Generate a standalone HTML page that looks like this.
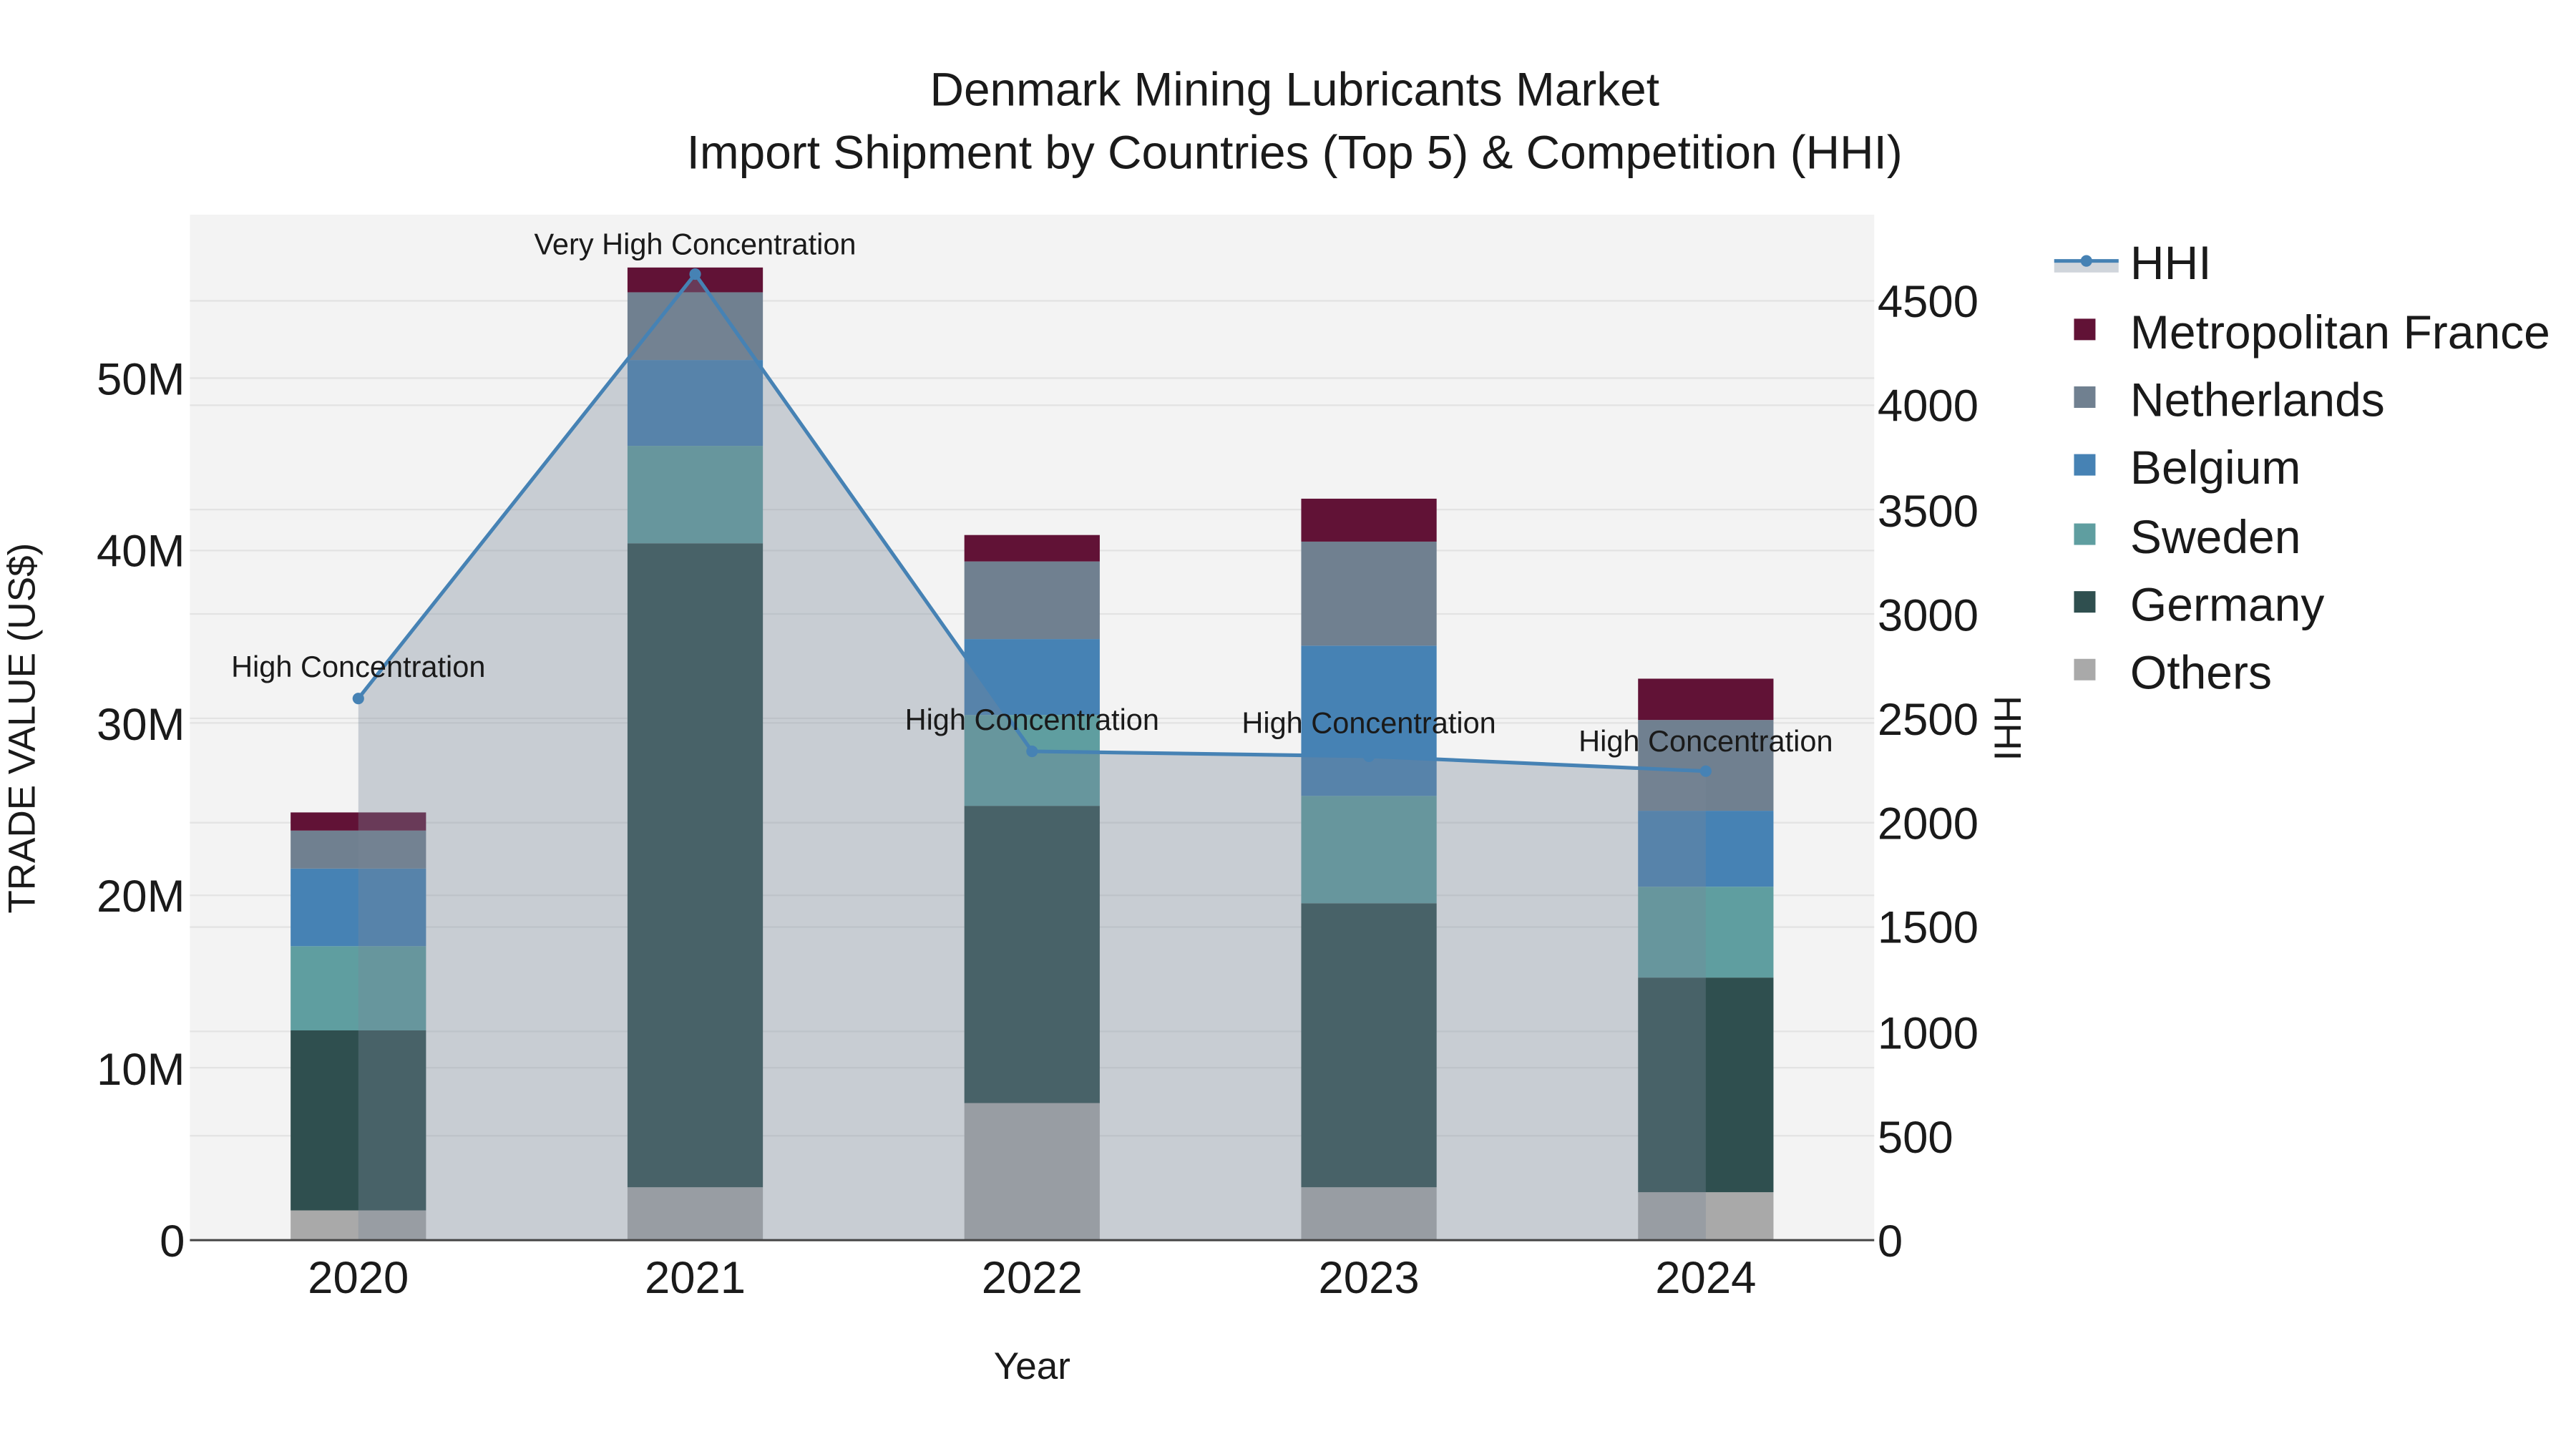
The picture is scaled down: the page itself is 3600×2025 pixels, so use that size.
<!DOCTYPE html>
<html><head><meta charset="utf-8"><style>
html,body{margin:0;padding:0;background:#fff;width:3600px;height:2025px;overflow:hidden}
svg{display:block}
text{font-family:"Liberation Sans",sans-serif;fill:#1a1a1a}
</style></head><body>
<svg width="3600" height="2025" viewBox="0 0 1560 877.5" xmlns="http://www.w3.org/2000/svg">
<rect x="0" y="0" width="1560" height="877.5" fill="#fff"/>
<rect x="115" y="130" width="1020" height="621" fill="#f3f3f3"/>
<g stroke="#e3e3e3" stroke-width="1">
<line x1="115" x2="1135" y1="646.6" y2="646.6"/><line x1="115" x2="1135" y1="542.2" y2="542.2"/>
<line x1="115" x2="1135" y1="437.8" y2="437.8"/><line x1="115" x2="1135" y1="333.4" y2="333.4"/>
<line x1="115" x2="1135" y1="229" y2="229"/>
<line x1="115" x2="1135" y1="687.8" y2="687.8"/><line x1="115" x2="1135" y1="624.6" y2="624.6"/>
<line x1="115" x2="1135" y1="561.4" y2="561.4"/><line x1="115" x2="1135" y1="498.2" y2="498.2"/>
<line x1="115" x2="1135" y1="435" y2="435"/><line x1="115" x2="1135" y1="371.8" y2="371.8"/>
<line x1="115" x2="1135" y1="308.6" y2="308.6"/><line x1="115" x2="1135" y1="245.4" y2="245.4"/>
<line x1="115" x2="1135" y1="182.2" y2="182.2"/>
</g>
<g>
<rect x="176" y="733" width="82" height="18" fill="#a9a9a9"/>
<rect x="176" y="624" width="82" height="109" fill="#2f4f4f"/>
<rect x="176" y="573" width="82" height="51" fill="#5f9ea0"/>
<rect x="176" y="526" width="82" height="47" fill="#4682b4"/>
<rect x="176" y="503" width="82" height="23" fill="#708090"/>
<rect x="176" y="492" width="82" height="11" fill="#611236"/>

<rect x="380" y="719" width="82" height="32" fill="#a9a9a9"/>
<rect x="380" y="329" width="82" height="390" fill="#2f4f4f"/>
<rect x="380" y="270" width="82" height="59" fill="#5f9ea0"/>
<rect x="380" y="218" width="82" height="52" fill="#4682b4"/>
<rect x="380" y="177" width="82" height="41" fill="#708090"/>
<rect x="380" y="162" width="82" height="15" fill="#611236"/>

<rect x="584" y="668" width="82" height="83" fill="#a9a9a9"/>
<rect x="584" y="488" width="82" height="180" fill="#2f4f4f"/>
<rect x="584" y="433" width="82" height="55" fill="#5f9ea0"/>
<rect x="584" y="387" width="82" height="46" fill="#4682b4"/>
<rect x="584" y="340" width="82" height="47" fill="#708090"/>
<rect x="584" y="324" width="82" height="16" fill="#611236"/>

<rect x="788" y="719" width="82" height="32" fill="#a9a9a9"/>
<rect x="788" y="547" width="82" height="172" fill="#2f4f4f"/>
<rect x="788" y="482" width="82" height="65" fill="#5f9ea0"/>
<rect x="788" y="391" width="82" height="91" fill="#4682b4"/>
<rect x="788" y="328" width="82" height="63" fill="#708090"/>
<rect x="788" y="302" width="82" height="26" fill="#611236"/>

<rect x="992" y="722" width="82" height="29" fill="#a9a9a9"/>
<rect x="992" y="592" width="82" height="130" fill="#2f4f4f"/>
<rect x="992" y="537" width="82" height="55" fill="#5f9ea0"/>
<rect x="992" y="491" width="82" height="46" fill="#4682b4"/>
<rect x="992" y="436" width="82" height="55" fill="#708090"/>
<rect x="992" y="411" width="82" height="25" fill="#611236"/>
</g>
<polygon points="217,423 421,166 625,455 829,458 1033,467 1033,751 217,751" fill="rgba(119,136,153,0.35)"/>
<polyline points="217,423 421,166 625,455 829,458 1033,467" fill="none" stroke="#4682b4" stroke-width="2.2"/>
<g fill="#4682b4"><circle cx="217" cy="423" r="3.5"/><circle cx="421" cy="166" r="3.5"/><circle cx="625" cy="455" r="3.5"/><circle cx="829" cy="458" r="3.5"/><circle cx="1033" cy="467" r="3.5"/></g>
<line x1="115" x2="1135" y1="751" y2="751" stroke="#444" stroke-width="1.3"/>
<g font-size="18" text-anchor="middle">
<text x="217" y="410">High Concentration</text>
<text x="421" y="154">Very High Concentration</text>
<text x="625" y="442">High Concentration</text>
<text x="829" y="444">High Concentration</text>
<text x="1033" y="455">High Concentration</text>
</g>
<g font-size="28.5" text-anchor="middle">
<text x="784" y="64">Denmark Mining Lubricants Market</text>
<text x="784" y="102">Import Shipment by Countries (Top 5) &amp; Competition (HHI)</text>
</g>
<g font-size="27.5" text-anchor="end">
<text x="112" y="761">0</text><text x="112" y="657">10M</text><text x="112" y="552">20M</text>
<text x="112" y="448">30M</text><text x="112" y="343">40M</text><text x="112" y="239">50M</text>
</g>
<g font-size="27.5" text-anchor="start">
<text x="1137" y="761">0</text><text x="1137" y="698">500</text><text x="1137" y="635">1000</text>
<text x="1137" y="571">1500</text><text x="1137" y="508">2000</text><text x="1137" y="445">2500</text>
<text x="1137" y="382">3000</text><text x="1137" y="319">3500</text><text x="1137" y="255">4000</text>
<text x="1137" y="192">4500</text>
</g>
<g font-size="27.5" text-anchor="middle">
<text x="217" y="783">2020</text><text x="421" y="783">2021</text><text x="625" y="783">2022</text>
<text x="829" y="783">2023</text><text x="1033" y="783">2024</text>
</g>
<text x="625" y="835" font-size="23" text-anchor="middle">Year</text>
<text transform="translate(21,441) rotate(-90)" font-size="23" text-anchor="middle">TRADE VALUE (US$)</text>
<text transform="translate(1208,441) rotate(90)" font-size="23" text-anchor="middle">HHI</text>
<rect x="1244" y="157" width="39" height="8" fill="rgba(119,136,153,0.35)"/>
<line x1="1244" x2="1283" y1="158" y2="158" stroke="#4682b4" stroke-width="2.2"/>
<circle cx="1263.5" cy="158" r="3.5" fill="#4682b4"/>
<g font-size="28.6">
<text x="1290" y="169">HHI</text>
<text x="1290" y="211">Metropolitan France</text>
<text x="1290" y="252">Netherlands</text>
<text x="1290" y="293">Belgium</text>
<text x="1290" y="335">Sweden</text>
<text x="1290" y="376">Germany</text>
<text x="1290" y="417">Others</text>
</g>
<rect x="1256" y="193" width="13" height="13" fill="#611236"/>
<rect x="1256" y="234" width="13" height="13" fill="#708090"/>
<rect x="1256" y="275" width="13" height="13" fill="#4682b4"/>
<rect x="1256" y="317" width="13" height="13" fill="#5f9ea0"/>
<rect x="1256" y="358" width="13" height="13" fill="#2f4f4f"/>
<rect x="1256" y="399" width="13" height="13" fill="#a9a9a9"/>
</svg>
</body></html>
